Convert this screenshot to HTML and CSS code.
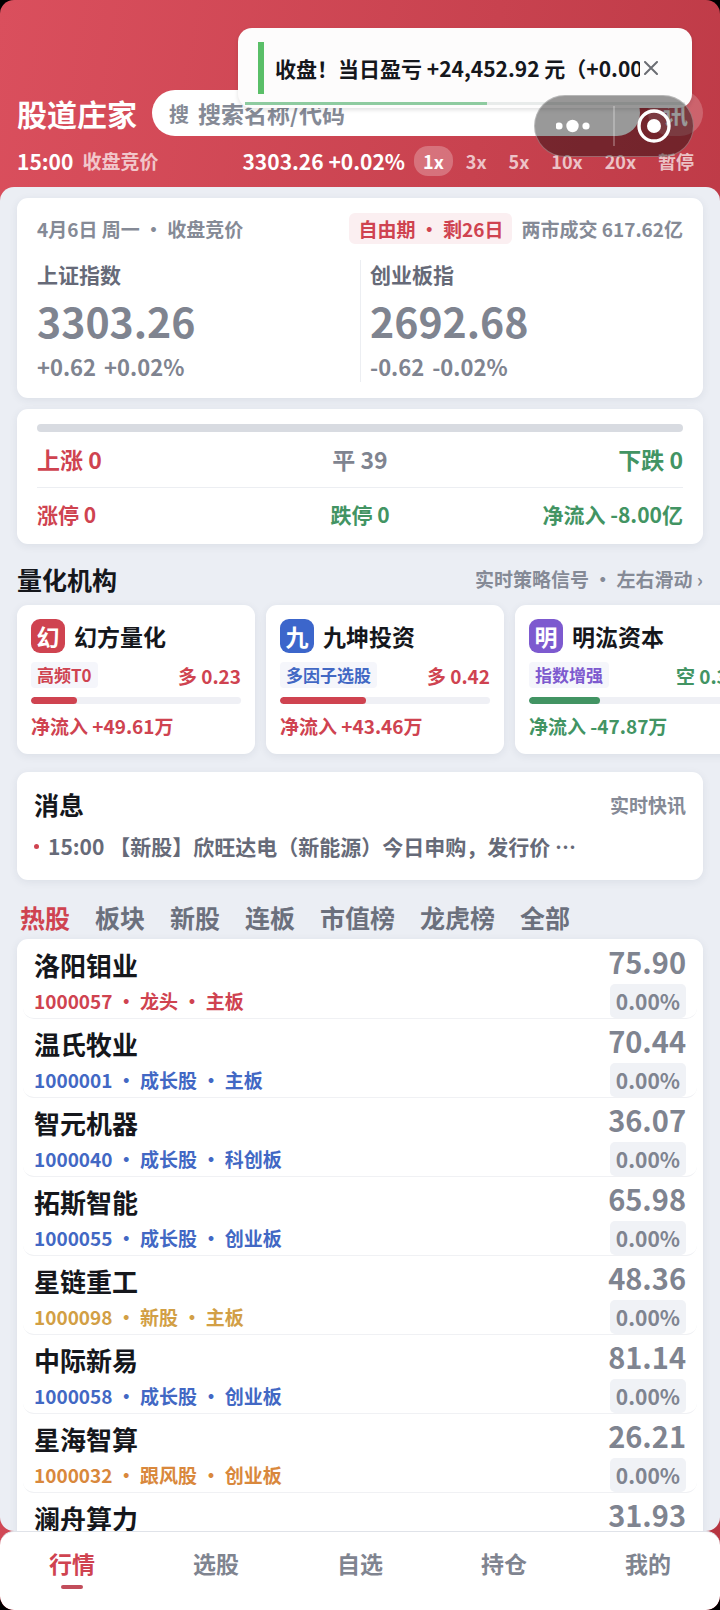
FILE: index.html
```html
<!DOCTYPE html>
<html lang="zh-CN">
<head>
<meta charset="UTF-8">
<meta name="viewport" content="width=device-width, initial-scale=1.0">
<title>股道庄家</title>
<link rel="stylesheet" href="styles.css">
</head>
<body>
<div class="app">
    <header class="header">
        <div class="header-row">
            <h1 class="brand">股道庄家</h1>
            <div class="search">
                <label for="search">搜</label>
                <input type="text" id="search" placeholder="搜索名称/代码">
            </div>
            <button class="news-btn">讯</button>
        </div>
        <div class="status-row">
            <span class="clock">15:00</span>
            <span class="phase">收盘竞价</span>
            <span class="ticker">3303.26 +0.02%</span>
            <div class="speeds">
                <button class="speed active">1x</button>
                <button class="speed">3x</button>
                <button class="speed">5x</button>
                <button class="speed">10x</button>
                <button class="speed">20x</button>
                <button class="speed">暂停</button>
            </div>
        </div>
    </header>

    <main class="content">
        <!-- 大盘指数 -->
        <section class="card market">
            <div class="market-top">
                <span class="date">4月6日 周一 ・ 收盘竞价</span>
                <span class="period">自由期 ・ 剩26日</span>
                <span>两市成交 617.62亿</span>
            </div>
            <div class="indices">
                <div class="index">
                    <div class="index-name">上证指数</div>
                    <div class="index-value">3303.26</div>
                    <div class="index-change"><span>+0.62</span><span>+0.02%</span></div>
                </div>
                <div class="index">
                    <div class="index-name">创业板指</div>
                    <div class="index-value">2692.68</div>
                    <div class="index-change"><span>-0.62</span><span>-0.02%</span></div>
                </div>
            </div>
        </section>

        <!-- 涨跌分布 -->
        <section class="card breadth">
            <div class="breadth-bar"></div>
            <div class="breadth-row">
                <span class="red">上涨 0</span>
                <span class="gray">平 39</span>
                <span class="green">下跌 0</span>
            </div>
            <div class="breadth-row small">
                <span class="red">涨停 0</span>
                <span class="green">跌停 0</span>
                <span class="green">净流入 -8.00亿</span>
            </div>
        </section>

        <!-- 量化机构 -->
        <div class="section-head">
            <h2>量化机构</h2>
            <span class="hint">实时策略信号 ・ 左右滑动 ›</span>
        </div>
        <div class="quants">
            <article class="card quant">
                <div class="quant-head"><span class="logo bg-red">幻</span><h3>幻方量化</h3></div>
                <div class="quant-mid"><span class="tag red">高频T0</span><span class="red">多 0.23</span></div>
                <div class="meter"><div class="meter-fill bg-red" style="width: 22%"></div></div>
                <div class="flow red">净流入 +49.61万</div>
            </article>
            <article class="card quant">
                <div class="quant-head"><span class="logo bg-blue">九</span><h3>九坤投资</h3></div>
                <div class="quant-mid"><span class="tag blue">多因子选股</span><span class="red">多 0.42</span></div>
                <div class="meter"><div class="meter-fill bg-red" style="width: 41%"></div></div>
                <div class="flow red">净流入 +43.46万</div>
            </article>
            <article class="card quant">
                <div class="quant-head"><span class="logo bg-purple">明</span><h3>明汯资本</h3></div>
                <div class="quant-mid"><span class="tag purple">指数增强</span><span class="green">空 0.34</span></div>
                <div class="meter"><div class="meter-fill bg-green" style="width: 34%"></div></div>
                <div class="flow green">净流入 -47.87万</div>
            </article>
        </div>

        <!-- 消息 -->
        <section class="card news">
            <div class="news-head">
                <h2>消息</h2>
                <span class="hint">实时快讯</span>
            </div>
            <div class="news-item">15:00 【新股】欣旺达电（新能源）今日申购，发行价 ⋯</div>
        </section>

        <div class="tabs">
            <button class="tab active">热股</button>
            <button class="tab">板块</button>
            <button class="tab">新股</button>
            <button class="tab">连板</button>
            <button class="tab">市值榜</button>
            <button class="tab">龙虎榜</button>
            <button class="tab">全部</button>
        </div>

        <ul class="card stocks">
            <li class="stock">
                <div class="stock-info"><div class="stock-name">洛阳钼业</div><div class="stock-meta red">1000057 ・ 龙头 ・ 主板</div></div>
                <div class="stock-quote"><div class="price">75.90</div><div class="change">0.00%</div></div>
            </li>
            <li class="stock">
                <div class="stock-info"><div class="stock-name">温氏牧业</div><div class="stock-meta blue">1000001 ・ 成长股 ・ 主板</div></div>
                <div class="stock-quote"><div class="price">70.44</div><div class="change">0.00%</div></div>
            </li>
            <li class="stock">
                <div class="stock-info"><div class="stock-name">智元机器</div><div class="stock-meta blue">1000040 ・ 成长股 ・ 科创板</div></div>
                <div class="stock-quote"><div class="price">36.07</div><div class="change">0.00%</div></div>
            </li>
            <li class="stock">
                <div class="stock-info"><div class="stock-name">拓斯智能</div><div class="stock-meta blue">1000055 ・ 成长股 ・ 创业板</div></div>
                <div class="stock-quote"><div class="price">65.98</div><div class="change">0.00%</div></div>
            </li>
            <li class="stock">
                <div class="stock-info"><div class="stock-name">星链重工</div><div class="stock-meta gold">1000098 ・ 新股 ・ 主板</div></div>
                <div class="stock-quote"><div class="price">48.36</div><div class="change">0.00%</div></div>
            </li>
            <li class="stock">
                <div class="stock-info"><div class="stock-name">中际新易</div><div class="stock-meta blue">1000058 ・ 成长股 ・ 创业板</div></div>
                <div class="stock-quote"><div class="price">81.14</div><div class="change">0.00%</div></div>
            </li>
            <li class="stock">
                <div class="stock-info"><div class="stock-name">星海智算</div><div class="stock-meta orange">1000032 ・ 跟风股 ・ 创业板</div></div>
                <div class="stock-quote"><div class="price">26.21</div><div class="change">0.00%</div></div>
            </li>
            <li class="stock">
                <div class="stock-info"><div class="stock-name">澜舟算力</div></div>
                <div class="stock-quote"><div class="price">31.93</div></div>
            </li>
        </ul>
    </main>

    <nav class="nav">
        <a href="#" class="nav-item active">行情</a>
        <a href="#" class="nav-item">选股</a>
        <a href="#" class="nav-item">自选</a>
        <a href="#" class="nav-item">持仓</a>
        <a href="#" class="nav-item">我的</a>
    </nav>

    <!-- 收盘提示 -->
    <div class="toast">
        <span class="toast-mark"></span>
        <span class="toast-text">收盘！当日盈亏 +24,452.92 元（+0.00%）</span>
        <button class="toast-close" aria-label="关闭">
            <svg width="14" height="14" viewBox="0 0 14 14"><path d="M1 1L13 13M13 1L1 13" stroke="#6b6d73" stroke-width="2" stroke-linecap="round"/></svg>
        </button>
        <div class="toast-progress"><div class="toast-progress-fill" style="width: 55%"></div></div>
    </div>

    <!-- 小程序胶囊按钮 -->
    <div class="capsule">
        <button class="capsule-btn" aria-label="更多">
            <svg width="36" height="14" viewBox="0 0 36 14" fill="#fff"><circle cx="3" cy="7" r="3.6"/><circle cx="16.5" cy="7" r="6.2"/><circle cx="30" cy="7" r="3.6"/></svg>
        </button>
        <span class="capsule-line"></span>
        <button class="capsule-btn" aria-label="退出">
            <svg width="34" height="34" viewBox="0 0 34 34"><circle cx="17" cy="17" r="15" fill="none" stroke="#fff" stroke-width="3.4"/><circle cx="17" cy="17" r="7" fill="#fff"/></svg>
        </button>
    </div>
</div>
</body>
</html>
```

FILE: styles.css
```css
* {
    box-sizing: border-box;
}
body {
    margin: 0;
    background: #000;
    font-family: "Noto Sans CJK SC", sans-serif;
    font-weight: 700;
    color: #15171c;
}
h1, h2, h3, ul {
    margin: 0;
    padding: 0;
}
button, input {
    font: inherit;
    border: none;
    background: none;
    padding: 0;
    margin: 0;
}
button {
    cursor: pointer;
}
.app {
    position: relative;
    display: flex;
    flex-direction: column;
    height: 100vh;
    overflow: hidden;
    border-radius: 14px;
    background: linear-gradient(100deg, #da4f5d 0%, #c8424f 50%, #b63440 100%);
}
.red { color: #cf4350; }
.green { color: #429463; }
.blue { color: #4268c4; }
.purple { color: #7d5acf; }
.gold { color: #d29f45; }
.orange { color: #d9883c; }
.gray { color: #7f8490; }
.bg-red { background: #cf4350; }
.bg-green { background: #429463; }
.bg-blue { background: #3c66cb; }
.bg-purple { background: #7d5acf; }

/* 顶部 */
.header {
    padding: 90px 17px 11px;
    color: #fff;
}
.header-row {
    display: flex;
    align-items: center;
    height: 46px;
}
.brand {
    font-size: 30px;
    line-height: 46px;
    margin-right: 15px;
}
.search {
    flex: 1;
    display: flex;
    align-items: center;
    gap: 9px;
    min-width: 0;
    height: 46px;
    padding: 0 17px;
    margin-right: 8px;
    border-radius: 23px;
    background: #fff;
    color: #858a96;
}
.search label {
    font-size: 20px;
}
.search input {
    flex: 1;
    min-width: 0;
    font-size: 23px;
    outline: none;
}
.search input::placeholder {
    color: #858a96;
    opacity: 1;
}
.news-btn {
    width: 55px;
    height: 46px;
    border-radius: 23px;
    background: rgba(255, 255, 255, 0.2);
    color: #fff;
    font-size: 25px;
    line-height: 46px;
}
.status-row {
    display: flex;
    align-items: center;
    height: 30px;
    margin-top: 10px;
    font-size: 21px;
    line-height: 30px;
}
.phase {
    margin-left: 9px;
    font-size: 19px;
    color: rgba(255, 255, 255, 0.7);
}
.ticker {
    margin-left: auto;
    white-space: nowrap;
}
.speeds {
    display: flex;
    gap: 4px;
    margin-left: 9px;
}
.speed {
    height: 30px;
    padding: 0 9px;
    border-radius: 14px;
    font-size: 18px;
    line-height: 28px;
    color: rgba(255, 255, 255, 0.7);
    white-space: nowrap;
}
.speed.active {
    background: rgba(255, 255, 255, 0.25);
    color: #fff;
}

/* 内容区 */
.content {
    flex: 1;
    min-height: 0;
    overflow: hidden;
    padding: 11px 17px 0;
    border-radius: 14px;
    background: #ebeef4;
}
.card {
    background: #fff;
    border-radius: 11px;
    box-shadow: 0 2px 8px rgba(40, 50, 80, 0.08);
}
.market {
    padding: 15px 20px 16px;
}
.market-top {
    display: flex;
    align-items: center;
    gap: 9px;
    height: 31px;
    font-size: 19px;
    line-height: 31px;
    color: #858a96;
    white-space: nowrap;
}
.date {
    margin-right: auto;
}
.period {
    padding: 0 9px;
    border-radius: 6px;
    background: #fbeff1;
    color: #cf4350;
}
.indices {
    display: grid;
    grid-template-columns: 1fr 1fr;
    margin-top: 16px;
}
.index {
    padding-bottom: 3px;
}
.index + .index {
    padding-left: 9px;
    border-left: 1px solid #eceef2;
}
.index-name {
    font-size: 21px;
    line-height: 28px;
    color: #666a78;
}
.index-value {
    font-size: 41px;
    line-height: 65px;
    color: #7f8490;
}
.index-change {
    display: flex;
    gap: 8px;
    font-size: 22px;
    line-height: 26px;
    color: #7f8490;
}
.breadth {
    margin-top: 11px;
    padding: 15px 20px 11px;
}
.breadth-bar {
    height: 8px;
    border-radius: 4px;
    background: #d8dbe1;
}
.breadth-row {
    display: grid;
    grid-template-columns: 1fr 1fr 1fr;
    padding: 9px 0;
    font-size: 23px;
    line-height: 37px;
}
.breadth-row span:nth-child(2) {
    text-align: center;
}
.breadth-row span:nth-child(3) {
    text-align: right;
}
.breadth-row.small {
    padding: 8px 0 0;
    border-top: 1px solid #eceef2;
    font-size: 21px;
}
.section-head {
    display: flex;
    align-items: center;
    justify-content: space-between;
    height: 61px;
    padding-top: 8px;
}
h2 {
    font-size: 25px;
    line-height: 36px;
}
.hint {
    font-size: 19px;
    color: #858a96;
}
.quants {
    display: flex;
    gap: 11px;
}
.quant {
    flex: 0 0 238px;
    padding: 14px 14px 12px;
}
.quant-head {
    display: flex;
    align-items: center;
    gap: 9px;
}
.logo {
    width: 34px;
    height: 34px;
    border-radius: 9px;
    color: #fff;
    font-size: 23px;
    line-height: 34px;
    text-align: center;
}
h3 {
    font-size: 23px;
    line-height: 34px;
}
.quant-mid {
    display: flex;
    align-items: center;
    justify-content: space-between;
    height: 26px;
    margin-top: 9px;
    font-size: 19px;
    white-space: nowrap;
}
.tag {
    padding: 0 6px;
    border-radius: 4px;
    background: #f5f6fb;
    font-size: 17px;
    line-height: 26px;
}
.meter {
    height: 7px;
    margin-top: 9px;
    border-radius: 4px;
    background: #eff0f5;
    overflow: hidden;
}
.meter-fill {
    height: 7px;
    border-radius: 4px;
}
.flow {
    margin-top: 6px;
    font-size: 19px;
    line-height: 32px;
}
.news {
    margin-top: 18px;
    padding: 14px 17px 10px;
}
.news-head {
    display: flex;
    align-items: center;
    justify-content: space-between;
}
.news-item {
    display: flex;
    align-items: center;
    gap: 9px;
    height: 48px;
    font-size: 21px;
    color: #666a78;
    white-space: nowrap;
}
.news-item::before {
    content: "";
    width: 5px;
    height: 5px;
    border-radius: 50%;
    background: #cf4350;
}
.tabs {
    display: flex;
    gap: 25px;
    padding: 17px 3px 2px;
}
.tab {
    color: #6b707d;
    font-size: 25px;
    line-height: 40px;
    white-space: nowrap;
}
.tab.active {
    color: #cf4350;
}
.stocks {
    list-style: none;
    padding: 1px 6px 0;
}
.stock {
    display: flex;
    justify-content: space-between;
    height: 79px;
    padding: 0 11px;
    border-bottom: 1px solid #f0f1f4;
    border-radius: 11px;
    overflow: hidden;
}
.stock-name {
    padding-top: 6px;
    font-size: 26px;
    line-height: 38px;
}
.stock-meta {
    font-size: 19px;
    line-height: 34px;
}
.stock-quote {
    display: flex;
    flex-direction: column;
    align-items: flex-end;
    color: #7f8490;
}
.price {
    font-size: 29px;
    line-height: 42px;
}
.change {
    margin-top: 2px;
    padding: 0 6px;
    border-radius: 5px;
    background: #f0f2f6;
    font-size: 21px;
    line-height: 34px;
}

/* 底部导航 */
.nav {
    display: flex;
    height: 79px;
    border-top: 1px solid #e0e3e9;
    border-radius: 14px;
    background: #fff;
}
.nav-item {
    flex: 1;
    display: flex;
    flex-direction: column;
    align-items: center;
    padding-top: 13px;
    color: #7f8490;
    font-size: 23px;
    line-height: 36px;
    text-decoration: none;
}
.nav-item.active {
    color: #cf4350;
}
.nav-item.active::after {
    content: "";
    width: 22px;
    height: 4px;
    margin-top: 4px;
    border-radius: 2px;
    background: #c24d5b;
}

/* 浮层 */
.toast {
    position: absolute;
    top: 28px;
    right: 28px;
    display: flex;
    align-items: center;
    width: 454px;
    height: 80px;
    padding: 0 34px 0 20px;
    border-radius: 14px;
    background: #fdfcfc;
    box-shadow: 0 2px 4px rgba(0, 0, 0, 0.12);
}
.toast-mark {
    flex: none;
    width: 6px;
    height: 52px;
    margin-right: 11px;
    background: #5abf68;
}
.toast-text {
    flex: 1;
    overflow: hidden;
    font-size: 21px;
    white-space: nowrap;
}
.toast-close {
    display: flex;
    margin-left: 4px;
}
.toast-progress {
    position: absolute;
    left: 7px;
    right: 7px;
    bottom: 3px;
    height: 3px;
    background: #e8ebea;
}
.toast-progress-fill {
    height: 3px;
    background: #8ecba0;
}
.capsule {
    position: absolute;
    top: 95px;
    right: 26px;
    display: flex;
    align-items: center;
    width: 160px;
    height: 62px;
    border: 1px solid rgba(255, 255, 255, 0.3);
    border-radius: 31px;
    background: rgba(0, 0, 0, 0.4);
}
.capsule-btn {
    flex: 1;
    display: flex;
    justify-content: center;
}
.capsule-line {
    width: 2px;
    height: 40px;
    background: rgba(255, 255, 255, 0.25);
}
```
